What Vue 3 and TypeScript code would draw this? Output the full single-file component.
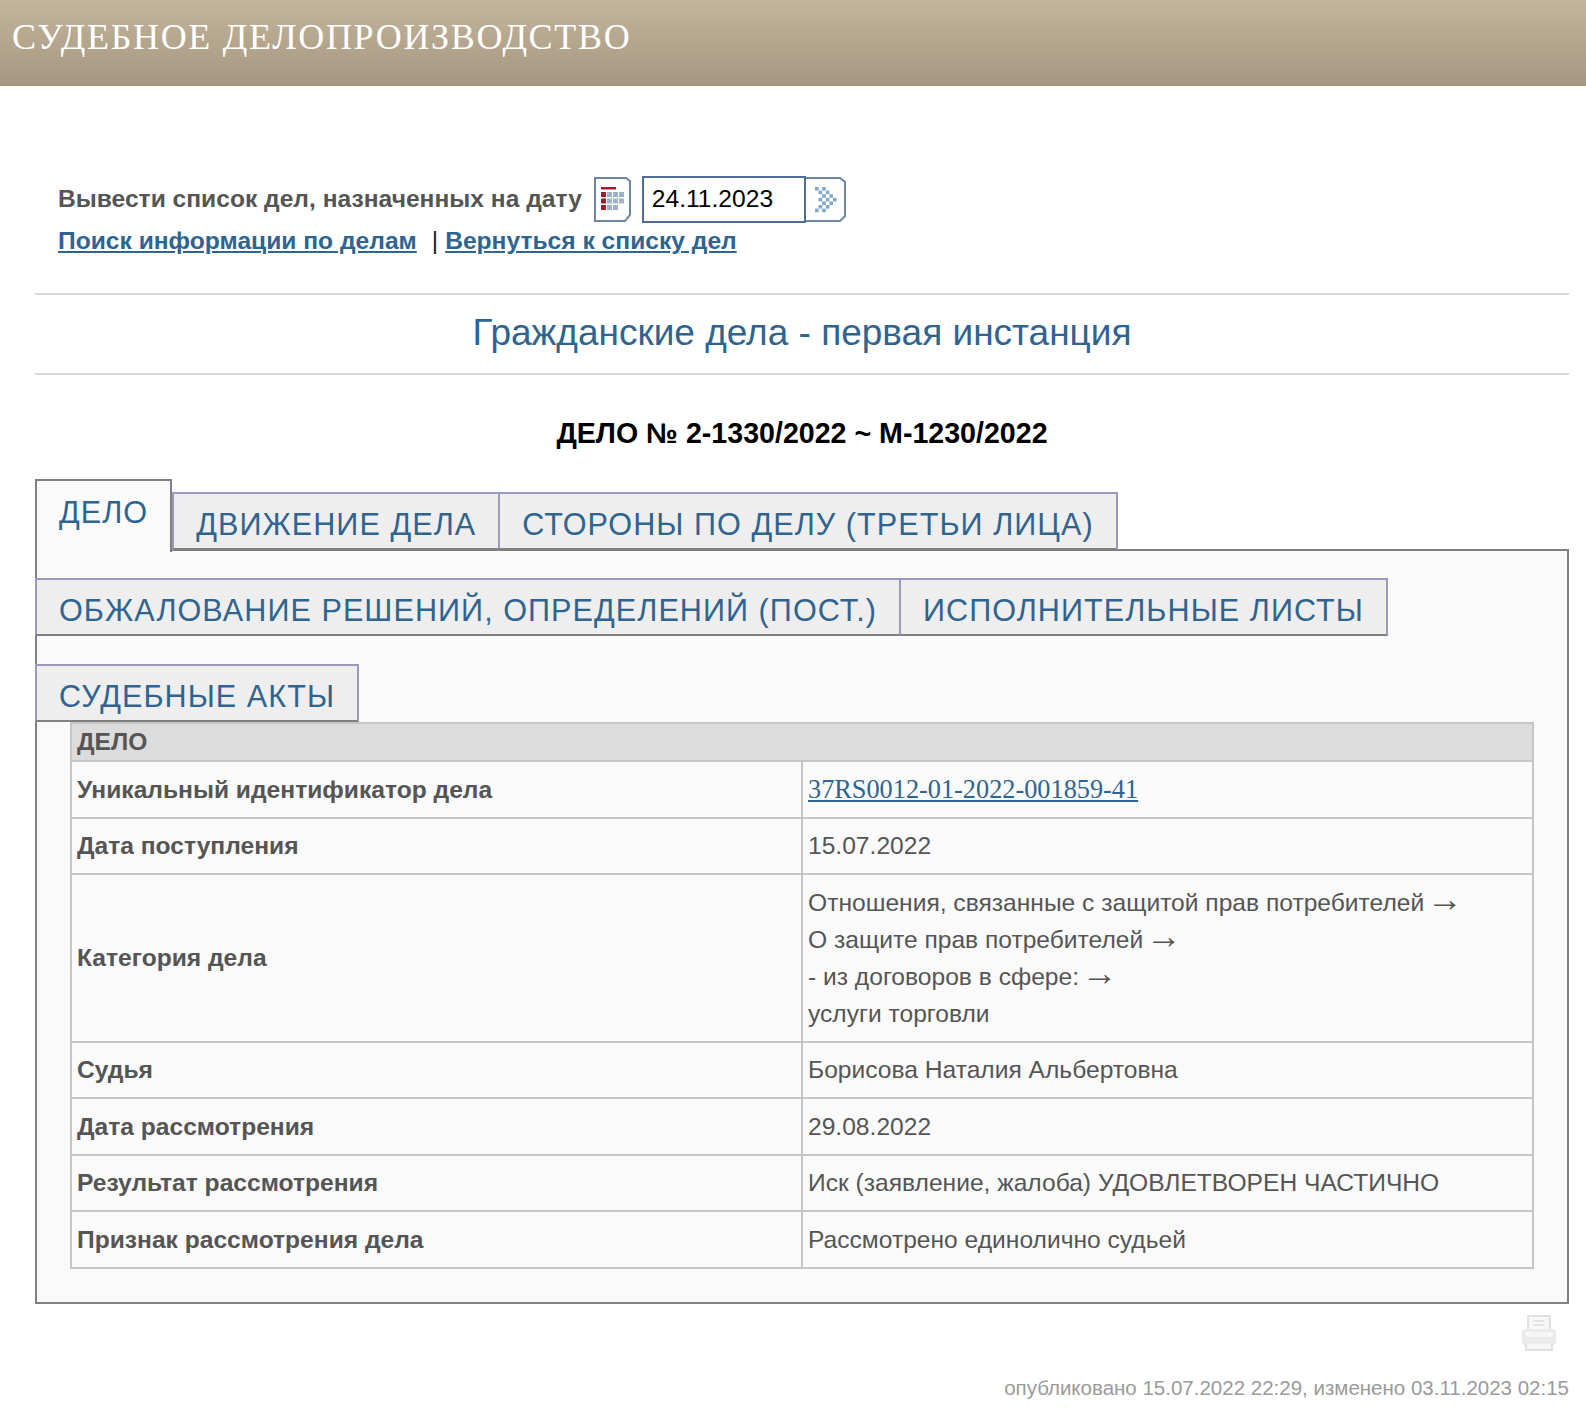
<script setup lang="ts">
const tabs = [
  { label: 'ДЕЛО', active: true },
  { label: 'ДВИЖЕНИЕ ДЕЛА', active: false },
  { label: 'СТОРОНЫ ПО ДЕЛУ (ТРЕТЬИ ЛИЦА)', active: false },
  { label: 'ОБЖАЛОВАНИЕ РЕШЕНИЙ, ОПРЕДЕЛЕНИЙ (ПОСТ.)', active: false },
  { label: 'ИСПОЛНИТЕЛЬНЫЕ ЛИСТЫ', active: false },
  { label: 'СУДЕБНЫЕ АКТЫ', active: false },
]
const rows = [
  { name: 'Дата поступления', lines: [{ t: '15.07.2022', arrow: false }] },
  {
    name: 'Категория дела',
    lines: [
      { t: 'Отношения, связанные с защитой прав потребителей ', arrow: true },
      { t: 'О защите прав потребителей ', arrow: true },
      { t: '- из договоров в сфере: ', arrow: true },
      { t: 'услуги торговли', arrow: false },
    ],
  },
  { name: 'Судья', lines: [{ t: 'Борисова Наталия Альбертовна', arrow: false }] },
  { name: 'Дата рассмотрения', lines: [{ t: '29.08.2022', arrow: false }] },
  { name: 'Результат рассмотрения', lines: [{ t: 'Иск (заявление, жалоба) УДОВЛЕТВОРЕН ЧАСТИЧНО', arrow: false }] },
  { name: 'Признак рассмотрения дела', lines: [{ t: 'Рассмотрено единолично судьей', arrow: false }] },
]
const calendarCells: [number, number, string][] = []
for (let r = 0; r < 3; r++) {
  calendarCells.push([0, r, '#96202f'])
  for (let c = 1; c < 4; c++) {
    if (r === 2 && c === 3) continue
    calendarCells.push([c, r, '#9db0cc'])
  }
}
const arrowCells: [number, number][] = [
  [0, 0], [2, 0],
  [1, 1], [3, 1],
  [2, 2], [4, 2],
  [1, 3], [3, 3], [5, 3],
  [2, 4], [4, 4],
  [1, 5], [3, 5],
  [0, 6], [2, 6],
]
</script>

<template>
  <div class="page">
    <header class="banner">СУДЕБНОЕ ДЕЛОПРОИЗВОДСТВО</header>
    <main class="content">
      <div class="filter">
        <div class="filter-row">
          <b class="filter-label">Вывести список дел, назначенных на дату</b>
          <svg class="btn-cal" width="37" height="45" viewBox="0 0 37 45">
            <path d="M1 1H32L36 4V38L31 44H1Z" fill="#fff" stroke="#6f85a6" stroke-width="2" />
            <rect x="7" y="10" width="15" height="2.5" fill="#96202f" />
            <rect
              v-for="(c, i) in calendarCells"
              :key="i"
              :x="7 + c[0] * 6"
              :y="15 + c[1] * 6.5"
              width="5"
              height="5"
              :fill="c[2]"
            />
          </svg>
          <span class="date-input">24.11.2023</span>
          <svg class="btn-go" width="40" height="45" viewBox="0 0 40 45">
            <path d="M0 1H34L39 5V39L34 44H0" fill="#fff" stroke="#6f85a6" stroke-width="2" />
            <rect
              v-for="(c, i) in arrowCells"
              :key="i"
              :x="9 + c[0] * 3.6"
              :y="10 + c[1] * 3.6"
              width="3.6"
              height="3.6"
              fill="#7fa8c9"
            />
          </svg>
        </div>
        <div class="filter-links">
          <a class="link" href="#">Поиск информации по делам</a>
          <span class="sep">|</span>
          <a class="link" href="#">Вернуться к списку дел</a>
        </div>
      </div>

      <h2 class="section-title">Гражданские дела - первая инстанция</h2>
      <h3 class="case-title">ДЕЛО № 2-1330/2022 ~ М-1230/2022</h3>

      <div class="tabs">
        <a v-for="t in tabs" :key="t.label" class="tab" :class="{ active: t.active }" href="#">{{ t.label }}</a>
      </div>
      <div class="panel">
        <table class="info">
          <tbody>
            <tr class="head"><th colspan="2">ДЕЛО</th></tr>
            <tr>
              <td class="name">Уникальный идентификатор дела</td>
              <td class="val"><a class="uid" href="#">37RS0012-01-2022-001859-41</a></td>
            </tr>
            <tr v-for="r in rows" :key="r.name">
              <td class="name">{{ r.name }}</td>
              <td class="val">
                <div v-for="l in r.lines" :key="l.t">{{ l.t }}<span v-if="l.arrow" class="arrow">→</span></div>
              </td>
            </tr>
          </tbody>
        </table>
      </div>

      <div class="print">
        <svg width="34" height="36" viewBox="0 0 33 36" fill="none" preserveAspectRatio="none">
          <path d="M6 14V1h21v13" fill="#f8f8f8" stroke="#e0e0e0" stroke-width="2" />
          <path d="M11 6h11M11 10h11" stroke="#e4e4e4" stroke-width="2" />
          <rect x="0" y="14" width="33" height="16" rx="3" fill="#ebebeb" />
          <rect x="3" y="17" width="27" height="5" fill="#f6f6f6" />
          <path d="M4 29v6h25v-6" fill="#f6f6f6" stroke="#e0e0e0" stroke-width="2" />
        </svg>
      </div>
      <div class="meta">опубликовано 15.07.2022 22:29, изменено 03.11.2023 02:15</div>
    </main>
  </div>
</template>

<style>
html, body { background: #fff; }
</style>

<style scoped>
.page {
  width: 1586px;
  height: 1428px;
  overflow: hidden;
  font-family: "Liberation Sans", Arial, sans-serif;
  color: #555;
  background: #fff;
}
.banner {
  height: 86px;
  box-sizing: border-box;
  padding: 14px 0 0 12px;
  font-family: "Liberation Serif", serif;
  font-size: 36px;
  line-height: 46px;
  letter-spacing: 1.68px;
  color: #fff;
  background: linear-gradient(#c4b49c, #a59780);
}
.content { padding: 0 17px 0 35px; }
.filter { padding: 88px 0 0 23px; }
.filter-row { display: flex; align-items: center; height: 49px; }
.filter-label { font-size: 24.6px; margin-right: 12px; }
.btn-cal { margin: 1px 11px 0 0; flex: none; }
.btn-go { margin-top: 1px; flex: none; }
.date-input {
  box-sizing: border-box;
  width: 164px;
  height: 47px;
  margin-top: 2px;
  padding-left: 8px;
  border: 2px solid #4f6d96;
  font-size: 24.6px;
  line-height: 41px;
  color: #000;
}
.filter-links { font-size: 24.6px; font-weight: bold; line-height: 36px; }
.link { color: #306490; text-decoration: underline; }
.sep { margin: 0 7px 0 15px; font-weight: normal; color: #222; }
.section-title {
  margin: 34px 0 0;
  height: 78px;
  border-top: 2px solid #d9d9d9;
  border-bottom: 2px solid #d9d9d9;
  text-align: center;
  font-size: 37px;
  font-weight: normal;
  line-height: 76px;
  color: #306490;
}
.case-title {
  margin: 0;
  padding-top: 40px;
  height: 104px;
  box-sizing: border-box;
  text-align: center;
  font-size: 28.6px;
  line-height: 37px;
  color: #000;
}
.tabs {
  position: relative;
  z-index: 1;
  display: flex;
  flex-wrap: wrap;
  align-items: flex-end;
  row-gap: 28px;
}
.tab {
  box-sizing: border-box;
  height: 58px;
  padding: 0 22px;
  font-size: 30.6px;
  letter-spacing: 1.05px;
  line-height: 61px;
  color: #306490;
  background: #eeeeee;
  text-decoration: none;
  border: 2px solid #9a9abf;
  border-bottom-color: #808080;
  margin-right: -2px;
}
.tab.active {
  height: 73px;
  margin-bottom: -2px;
  line-height: 62px;
  background: #fafafa;
  border-color: #808080;
  border-bottom: none;
  margin-right: 0;
}
.panel {
  box-sizing: border-box;
  margin-top: -173px;
  padding: 171px 33px 33px;
  background: #fafafa;
  border: 2px solid #808080;
}
.info {
  width: 100%;
  table-layout: fixed;
  border-collapse: collapse;
  font-size: 24.6px;
  line-height: 37px;
}
.info th, .info td {
  border: 2px solid #c6c6c6;
  padding: 8.75px 0 8.75px 5px;
  text-align: left;
  vertical-align: middle;
}
.info th {
  padding: 0 0 0 5px;
  height: 36px;
  line-height: 34px;
  background: #dcdcdc;
}
.name { font-weight: bold; }
.uid { font-family: "Liberation Serif", serif; color: #306490; font-size: 26.3px; }
.arrow { font-size: 36px; line-height: 0; margin-left: -4px; }
.print {
  box-sizing: border-box;
  display: flex;
  justify-content: flex-end;
  padding: 11px 13px 0 0;
  height: 48px;
}
.meta { text-align: right; margin-top: 22px; font-size: 20.5px; color: #9a9a9a; line-height: 28px; }
</style>
